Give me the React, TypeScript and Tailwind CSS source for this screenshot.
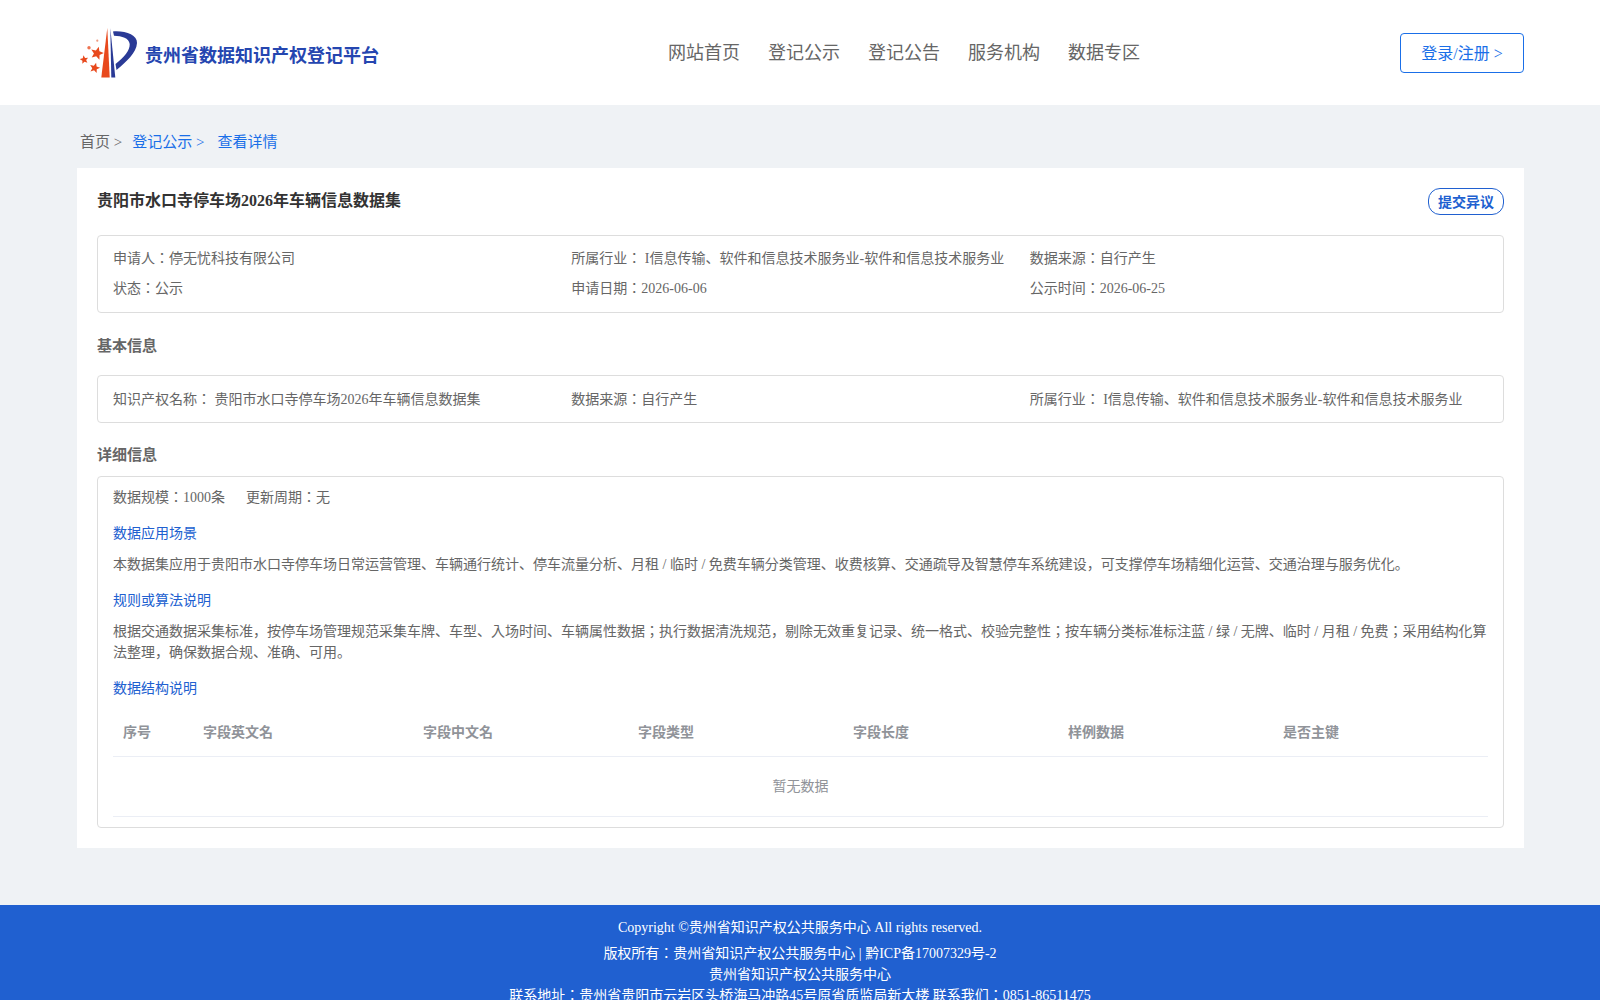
const font = { fontFamily: '"Liberation Serif", "Noto Sans CJK JP", serif' };

const navItems = ["网站首页", "登记公示", "登记公告", "服务机构", "数据专区"];
const columns = [
  { label: "序号", width: "w-[80px]" },
  { label: "字段英文名", width: "w-[220px]" },
  { label: "字段中文名", width: "w-[215px]" },
  { label: "字段类型", width: "w-[215px]" },
  { label: "字段长度", width: "w-[215px]" },
  { label: "样例数据", width: "w-[215px]" },
  { label: "是否主键", width: "w-[215px]" },
];

function starPoints(cx: number, cy: number, r: number, rot: number) {
  const pts: string[] = [];
  for (let i = 0; i < 10; i++) {
    const rad = i % 2 === 0 ? r : r * 0.45;
    const a = ((rot + i * 36 - 90) * Math.PI) / 180;
    pts.push(`${(cx + rad * Math.cos(a)).toFixed(2)},${(cy + rad * Math.sin(a)).toFixed(2)}`);
  }
  return pts.join(" ");
}

function Logo() {
  return (
    <svg width="60" height="52" viewBox="0 0 60 52" className="shrink-0">
      <path d="M27.3 1 L21.3 50.500 L29.700 50.500 Z" fill="#e8491d" />
      <path d="M30.300 1 L31.300 50.500 L35.300 50.500 Z" fill="#2a3a96" />
      <path d="M33 4.500 C45 3.500 57.500 8 57 16 C56.500 26 46 35 36.500 43 L35.500 37 C44 30 50 24 49.700 17 C49 11 42 9 34 8.700 Z" fill="#2a3a96" />
      <polygon points={starPoints(17, 26.300, 6.800, 15)} fill="#e8491d" />
      <polygon points={starPoints(4.200, 32.700, 4.400, -10)} fill="#e8491d" />
      <polygon points={starPoints(14.700, 41, 5.400, 15)} fill="#e8491d" />
      <circle cx="9" cy="20.700" r="1.700" fill="#ee7350" />
      <circle cx="17.300" cy="13.700" r="1.100" fill="#ee9a80" />
    </svg>
  );
}

export default function App() {
  return (
    <div className="h-screen overflow-hidden bg-[#eff2f5] text-[14px] text-[#666]" style={font}>
      <header className="h-[105px] bg-white flex items-start pl-[77px] pr-[76px]">
        <div className="w-[500px] flex items-start pt-[27px] pl-[3px]">
          <Logo />
          <span className="ml-[5px] mt-[3px] text-[18px] font-bold text-[#2546b0] leading-[52px] whitespace-nowrap">
            贵州省数据知识产权登记平台
          </span>
        </div>
        <nav className="ml-[91px] flex gap-[28px] pt-[40px] text-[18px] leading-[27px] text-[#666]">
          {navItems.map((item) => (
            <span key={item}>{item}</span>
          ))}
        </nav>
        <button className="ml-auto mt-[33px] w-[124px] h-[40px] pt-[2px] border border-[#1a6fe8] rounded-[4px] text-[16px] text-[#1a6fe8]">
          登录/注册 &gt;
        </button>
      </header>

      <main className="ml-[77px] w-[1447px]">
        <div className="h-[63px] pl-[3px] pt-[27px] text-[15px] leading-[21px] whitespace-nowrap">
          首页 &gt;
          <span className="ml-[10px] text-[#1a6fe8]">登记公示 &gt;</span>
          <span className="ml-[13px] text-[#1a6fe8]">查看详情</span>
        </div>

        <section className="bg-white h-[680px] px-[20px] pt-[20px]">
          <div className="flex items-start justify-between h-[47px]">
            <h1 className="text-[16px] font-bold text-[#333] leading-[26px]">贵阳市水口寺停车场2026年车辆信息数据集</h1>
            <button className="w-[76px] h-[27px] border border-[#2060d0] rounded-[12px] font-bold text-[#2060d0] leading-[27px]">
              提交异议
            </button>
          </div>

          <div className="border border-[#ddd] rounded-[4px] h-[78px] px-[15px] pt-[8px] grid grid-cols-3 content-start leading-[30px]">
            <div>申请人：停无忧科技有限公司</div>
            <div className="whitespace-nowrap">所属行业： I信息传输、软件和信息技术服务业-软件和信息技术服务业</div>
            <div>数据来源：自行产生</div>
            <div>状态：公示</div>
            <div>申请日期：2026-06-06</div>
            <div>公示时间：2026-06-25</div>
          </div>

          <h2 className="text-[15px] font-bold mt-[22px] mb-[18px] leading-[22px]">基本信息</h2>

          <div className="border border-[#ddd] rounded-[4px] h-[48px] px-[15px] grid grid-cols-3 items-center">
            <div>知识产权名称： 贵阳市水口寺停车场2026年车辆信息数据集</div>
            <div>数据来源：自行产生</div>
            <div className="whitespace-nowrap">所属行业： I信息传输、软件和信息技术服务业-软件和信息技术服务业</div>
          </div>

          <h2 className="text-[15px] font-bold mt-[21px] mb-[10px] leading-[22px]">详细信息</h2>

          <div className="border border-[#ddd] rounded-[4px] h-[352px] px-[15px] pt-[10px]">
            <div className="leading-[21px]">
              数据规模：1000条<span className="ml-[21px]">更新周期：无</span>
            </div>
            <h3 className="mt-[15px] text-[#2060d0] leading-[21px]">数据应用场景</h3>
            <p className="mt-[10px] leading-[21px]">
              本数据集应用于贵阳市水口寺停车场日常运营管理、车辆通行统计、停车流量分析、月租 / 临时 / 免费车辆分类管理、收费核算、交通疏导及智慧停车系统建设，可支撑停车场精细化运营、交通治理与服务优化。
            </p>
            <h3 className="mt-[15px] text-[#2060d0] leading-[21px]">规则或算法说明</h3>
            <p className="mt-[10px] leading-[21px]">
              根据交通数据采集标准，按停车场管理规范采集车牌、车型、入场时间、车辆属性数据；执行数据清洗规范，剔除无效重复记录、统一格式、校验完整性；按车辆分类标准标注蓝 / 绿 / 无牌、临时 / 月租 / 免费；采用结构化算法整理，确保数据合规、准确、可用。
            </p>
            <h3 className="mt-[15px] text-[#2060d0] leading-[21px]">数据结构说明</h3>

            <div className="mt-[10px]">
              <div className="flex h-[48px] items-center border-b border-[#ebeef5] font-bold text-[#909399]">
                {columns.map((col) => (
                  <div key={col.label} className={`${col.width} pl-[10px]`}>
                    {col.label}
                  </div>
                ))}
              </div>
              <div className="h-[60px] flex items-center justify-center border-b border-[#ebeef5] text-[#909399]">
                暂无数据
              </div>
            </div>
          </div>
        </section>
      </main>

      <footer className="mt-[57px] bg-[#2060d0] text-white text-center pt-[12px]">
        <div className="leading-[21px] mb-[5px]">Copyright ©贵州省知识产权公共服务中心 All rights reserved.</div>
        <div className="leading-[21px]">版权所有：贵州省知识产权公共服务中心 | 黔ICP备17007329号-2</div>
        <div className="leading-[21px]">贵州省知识产权公共服务中心</div>
        <div className="leading-[21px]">联系地址：贵州省贵阳市云岩区头桥海马冲路45号原省质监局新大楼 联系我们：0851-86511475</div>
      </footer>
    </div>
  );
}
